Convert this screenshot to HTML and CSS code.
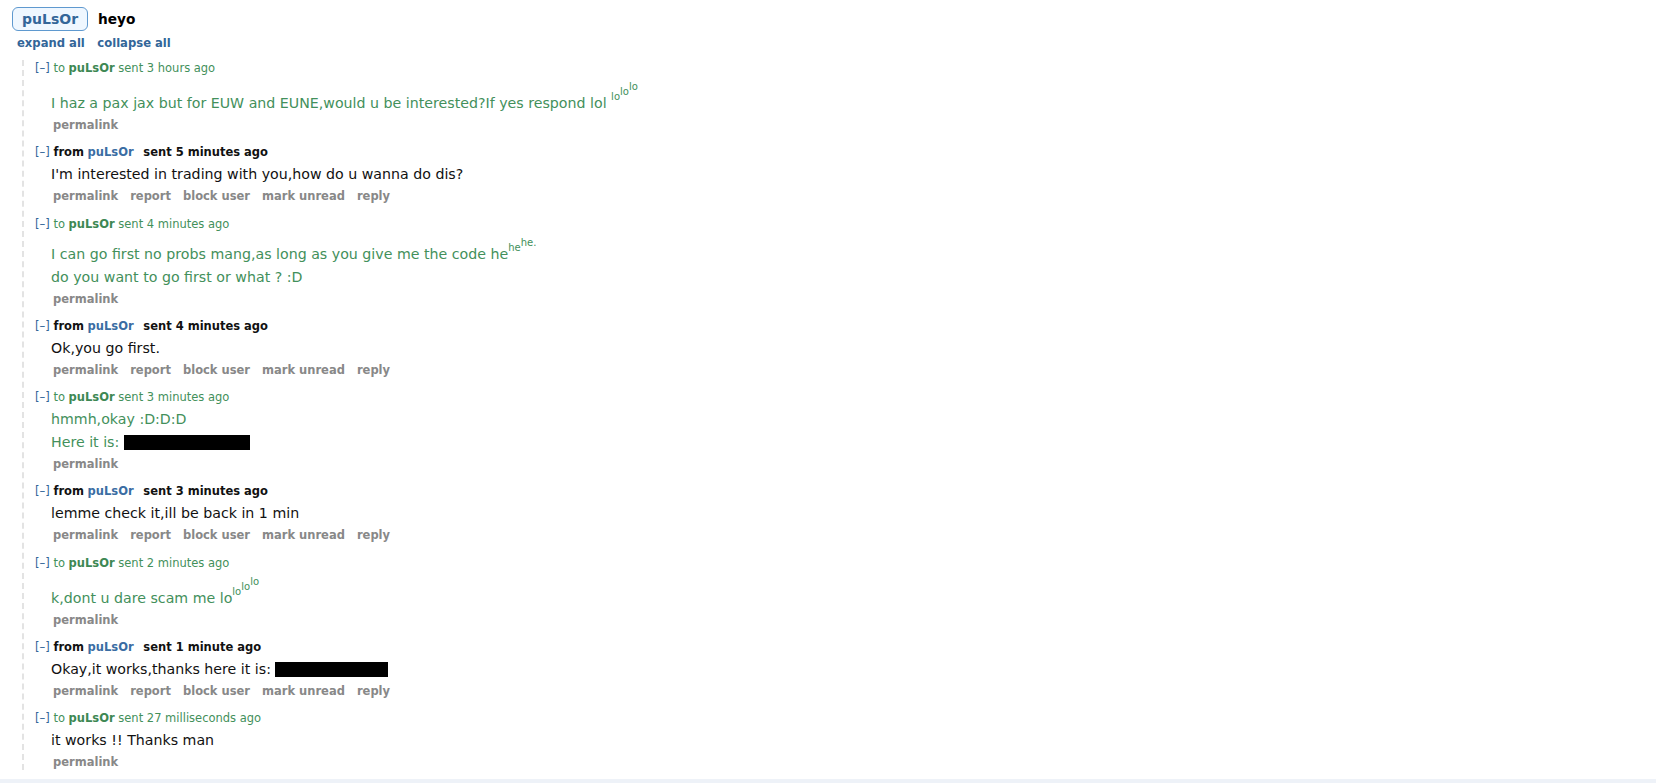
FILE: index.html
```html
<!DOCTYPE html>
<html>
<head>
<meta charset="utf-8">
<title>heyo</title>
<link rel="stylesheet" href="styles.css">
</head>
<body>
<div class="page">
  <div class="subject-row">
    <a class="user-btn">puLsOr</a>
    <span class="subject">heyo</span>
  </div>
  <div class="toggles"><a>expand all</a><a>collapse all</a></div>

  <div class="thread">
    <div class="msg sent">
      <p class="tagline"><a class="expand">[–]</a> to <a class="author">puLsOr</a> sent 3 hours ago</p>
      <div class="md"><p>I haz a pax jax but for EUW and EUNE,would u be interested?If yes respond lol <sup>lo<sup>lo<sup>lo</sup></sup></sup></p></div>
      <ul class="buttons"><li><a>permalink</a></li></ul>
    </div>

    <div class="msg received">
      <p class="tagline"><a class="expand">[–]</a> <span class="dir">from</span> <a class="author">puLsOr</a> <span class="when">sent 5 minutes ago</span></p>
      <div class="md"><p>I'm interested in trading with you,how do u wanna do dis?</p></div>
      <ul class="buttons"><li><a>permalink</a></li><li><a>report</a></li><li><a>block user</a></li><li><a>mark unread</a></li><li><a>reply</a></li></ul>
    </div>

    <div class="msg sent">
      <p class="tagline"><a class="expand">[–]</a> to <a class="author">puLsOr</a> sent 4 minutes ago</p>
      <div class="md"><p>I can go first no probs mang,as long as you give me the code he<sup>he<sup>he.</sup></sup></p><p>do you want to go first or what ? :D</p></div>
      <ul class="buttons"><li><a>permalink</a></li></ul>
    </div>

    <div class="msg received">
      <p class="tagline"><a class="expand">[–]</a> <span class="dir">from</span> <a class="author">puLsOr</a> <span class="when">sent 4 minutes ago</span></p>
      <div class="md"><p>Ok,you go first.</p></div>
      <ul class="buttons"><li><a>permalink</a></li><li><a>report</a></li><li><a>block user</a></li><li><a>mark unread</a></li><li><a>reply</a></li></ul>
    </div>

    <div class="msg sent">
      <p class="tagline"><a class="expand">[–]</a> to <a class="author">puLsOr</a> sent 3 minutes ago</p>
      <div class="md"><p>hmmh,okay :D:D:D</p><p>Here it is: <span class="redacted r1"></span></p></div>
      <ul class="buttons"><li><a>permalink</a></li></ul>
    </div>

    <div class="msg received">
      <p class="tagline"><a class="expand">[–]</a> <span class="dir">from</span> <a class="author">puLsOr</a> <span class="when">sent 3 minutes ago</span></p>
      <div class="md"><p>lemme check it,ill be back in 1 min</p></div>
      <ul class="buttons"><li><a>permalink</a></li><li><a>report</a></li><li><a>block user</a></li><li><a>mark unread</a></li><li><a>reply</a></li></ul>
    </div>

    <div class="msg sent">
      <p class="tagline"><a class="expand">[–]</a> to <a class="author">puLsOr</a> sent 2 minutes ago</p>
      <div class="md"><p>k,dont u dare scam me lo<sup>lo<sup>lo<sup>lo</sup></sup></sup></p></div>
      <ul class="buttons"><li><a>permalink</a></li></ul>
    </div>

    <div class="msg received">
      <p class="tagline"><a class="expand">[–]</a> <span class="dir">from</span> <a class="author">puLsOr</a> <span class="when">sent 1 minute ago</span></p>
      <div class="md"><p>Okay,it works,thanks here it is: <span class="redacted r2"></span></p></div>
      <ul class="buttons"><li><a>permalink</a></li><li><a>report</a></li><li><a>block user</a></li><li><a>mark unread</a></li><li><a>reply</a></li></ul>
    </div>

    <div class="msg sent last">
      <p class="tagline"><a class="expand">[–]</a> to <a class="author">puLsOr</a> sent 27 milliseconds ago</p>
      <div class="md plain"><p>it works !! Thanks man</p></div>
      <ul class="buttons"><li><a>permalink</a></li></ul>
    </div>
  </div>
</div>
<div class="footer"></div>
</body>
</html>
```

FILE: styles.css
```css
* { box-sizing: border-box; }
html, body { margin: 0; padding: 0; background: #fff; }
body {
  font-family: "DejaVu Sans", "Liberation Sans", sans-serif;
  color: #222;
}
a { text-decoration: none; cursor: pointer; }

.page { padding: 7px 0 0 12px; }

.subject-row {
  display: flex;
  align-items: center;
  gap: 10px;
  height: 24px;
}
.user-btn {
  display: inline-flex;
  align-items: center;
  height: 24px;
  padding: 0 9px;
  border: 1px solid #5f99cf;
  border-radius: 6px;
  background: #eff7ff;
  color: #336699;
  font-size: 14px;
  font-weight: bold;
}
.subject {
  font-size: 13.7px;
  font-weight: bold;
  color: #000;
}

.toggles {
  display: flex;
  gap: 12.5px;
  margin: 4px 0 0 5px;
  font-size: 11.6px;
  font-weight: bold;
  line-height: 16px;
}
.toggles a { color: #336699; }

.thread {
  margin: 9px 0 0 10px;
  padding-left: 11px;
  border-left: 2px dashed #e3e3e3;
}

.msg { margin-bottom: 11.3px; }
.msg.last { margin-bottom: 9px; }

.tagline {
  margin: 0 0 3px;
  font-size: 11.5px;
  line-height: 16px;
}
.tagline .expand { color: #336699; }
.tagline .author { font-weight: bold; }

.sent .tagline,
.sent .md { color: #43905b; }
.sent .tagline .author { color: #3d8853; }
.sent .md.plain { color: #111; }

.received .tagline { color: #111; }
.received .tagline .dir,
.received .tagline .when { font-weight: bold; }
.received .tagline .author { color: #3a6da3; margin-right: 6px; }
.received .md { color: #111; }

.md {
  padding-left: 16px;
  font-size: 14.2px;
  line-height: 22px;
}
.md p { margin: 0; }
.md p + p { margin-top: 1px; }
.md sup {
  font-size: 10px;
  line-height: 16px;
  vertical-align: 8px;
}
.md sup sup { vertical-align: 5px; }

.redacted {
  display: inline-block;
  background: #000;
  height: 15px;
  vertical-align: -3px;
}
.redacted.r1 { width: 126px; }
.redacted.r2 { width: 113px; }

.buttons {
  list-style: none;
  margin: 3px 0 0;
  padding: 0 0 0 18px;
  display: flex;
  gap: 12px;
  font-size: 11.5px;
  font-weight: bold;
  line-height: 16px;
}
.buttons a { color: #888; }

.footer {
  height: 20px;
  background: #eef2f8;
}
```
